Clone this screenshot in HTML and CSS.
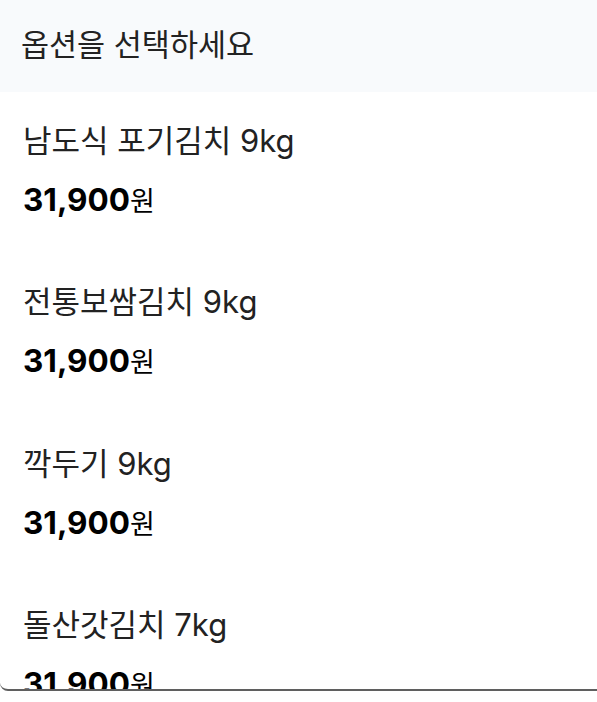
FILE: index.html
```html
<!DOCTYPE html>
<html lang="ko">
<head>
<meta charset="utf-8">
<link rel="stylesheet" href="styles.css">
</head>
<body>
<div class="dropdown">
  <div class="header">옵션을 선택하세요</div>
  <ul class="list">
    <li class="item"><div class="name">남도식 포기김치 9kg</div><div class="price"><b>31,900</b>원</div></li>
    <li class="item"><div class="name">전통보쌈김치 9kg</div><div class="price"><b>31,900</b>원</div></li>
    <li class="item"><div class="name">깍두기 9kg</div><div class="price"><b>31,900</b>원</div></li>
    <li class="item"><div class="name">돌산갓김치 7kg</div><div class="price"><b>31,900</b>원</div></li>
    <li class="item"><div class="name">총각김치 5kg</div><div class="price"><b>31,900</b>원</div></li>
  </ul>
</div>
</body>
</html>
```
FILE: styles.css
```css
html, body {
  margin: 0;
  padding: 0;
  background: #fff;
}
body {
  font-family: "Inter", "Noto Sans CJK KR", sans-serif;
  color: #222;
}
.dropdown {
  height: 689px;
  overflow: hidden;
  border-bottom: 2px solid #5f5f5f;
  border-bottom-left-radius: 8px;
  background: #fff;
}
.header {
  height: 92px;
  box-sizing: border-box;
  padding: 0 21px 7px;
  display: flex;
  align-items: center;
  background: #f8fafc;
  font-size: 30.5px;
  font-weight: 400;
  color: #222;
}
.list {
  list-style: none;
  margin: 0;
  padding: 0;
}
.item {
  height: 161.3px;
  box-sizing: border-box;
  padding: 29px 23px 0;
}
.name {
  font-size: 31px;
  line-height: 40px;
  font-weight: 400;
  color: #222;
}
.price {
  margin-top: 20px;
  font-size: 27px;
  line-height: 38px;
  color: #000;
}
.price b {
  font-weight: 700;
  font-size: 31.5px;
}
```
